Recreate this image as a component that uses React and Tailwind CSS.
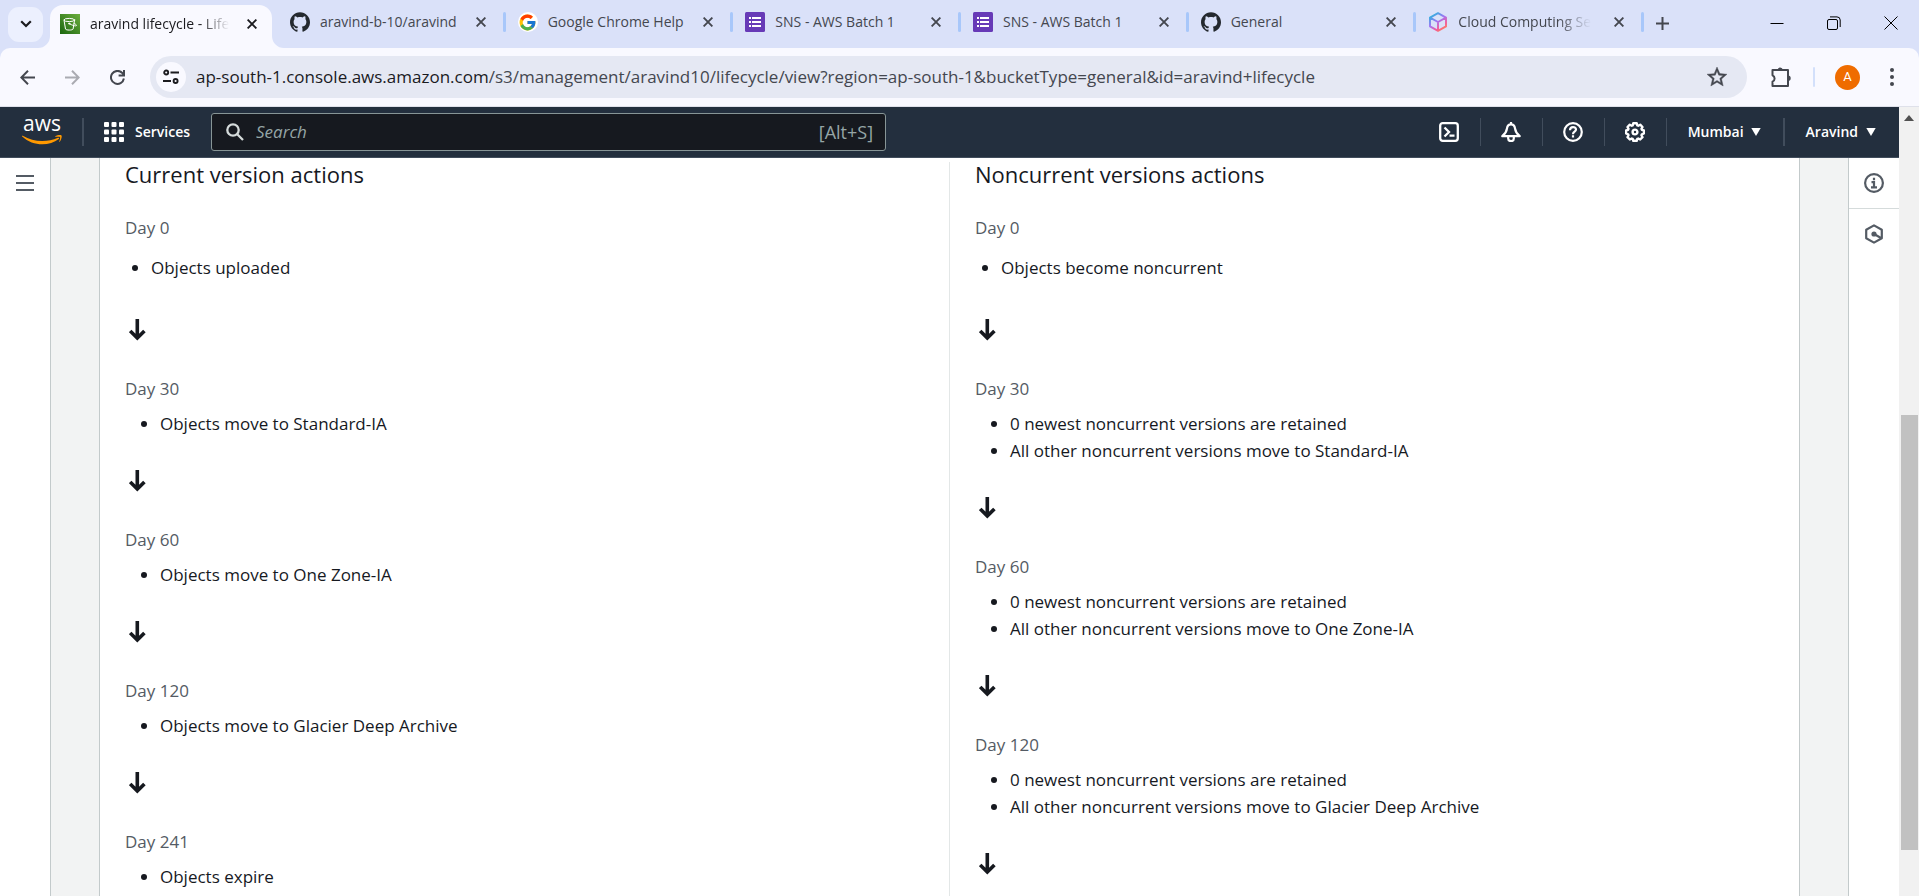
import { SiGithub } from 'react-icons/si'
import { FcGoogle } from 'react-icons/fc'

const TABS = [
  { icon: 'github', title: 'aravind-b-10/aravind' },
  { icon: 'google', title: 'Google Chrome Help' },
  { icon: 'forms', title: 'SNS - AWS Batch 1' },
  { icon: 'forms', title: 'SNS - AWS Batch 1' },
  { icon: 'github', title: 'General' },
  { icon: 'cube', title: 'Cloud Computing Se', fade: true },
]

const CURRENT = [
  { day: 'Day 0', items: ['Objects uploaded'] },
  { day: 'Day 30', items: ['Objects move to Standard-IA'] },
  { day: 'Day 60', items: ['Objects move to One Zone-IA'] },
  { day: 'Day 120', items: ['Objects move to Glacier Deep Archive'] },
  { day: 'Day 241', items: ['Objects expire'] },
]

const NONCURRENT = [
  { day: 'Day 0', items: ['Objects become noncurrent'] },
  {
    day: 'Day 30',
    items: ['0 newest noncurrent versions are retained', 'All other noncurrent versions move to Standard-IA'],
  },
  {
    day: 'Day 60',
    items: ['0 newest noncurrent versions are retained', 'All other noncurrent versions move to One Zone-IA'],
  },
  {
    day: 'Day 120',
    items: ['0 newest noncurrent versions are retained', 'All other noncurrent versions move to Glacier Deep Archive'],
    more: true,
  },
]

function BucketIcon() {
  return (
    <svg className="size-5 shrink-0" viewBox="0 0 20 20" fill="none">
      <defs>
        <linearGradient id="bucket" x1="0" y1="1" x2="1" y2="0">
          <stop stopColor="#1b660f" />
          <stop offset="1" stopColor="#6cae3e" />
        </linearGradient>
      </defs>
      <path fill="url(#bucket)" d="M0 0h20v20H0z" />
      <g stroke="#fff" strokeWidth="1" strokeLinecap="round">
        <ellipse cx="9.3" cy="6" rx="5.3" ry="1.6" />
        <path d="M4 6l1.500 9c.2 1.400 7.400 1.400 7.600 0L14.600 6M9.300 9.700c2.500 1.500 7.200 3 7.200 1.700 0-.8-1.200-1.400-2.500-1.900" />
        <circle cx="9.200" cy="9.600" r=".6" fill="#fff" />
      </g>
    </svg>
  )
}

function FormsIcon() {
  return (
    <svg className="size-5 shrink-0" viewBox="0 0 20 20">
      <rect width="20" height="20" rx="1.500" fill="#673ab7" />
      <path
        fill="#fff"
        d="M4 5h2v2H4zM7 5h9v2H7zM4 9h2v2H4zM7 9h9v2H7zM4 13h2v2H4zM7 13h9v2H7z"
      />
    </svg>
  )
}

function CubeIcon() {
  return (
    <svg className="size-5 shrink-0" viewBox="0 0 20 20" fill="none">
      <defs>
        <linearGradient id="cube" x1="3" y1="1" x2="16" y2="19" gradientUnits="userSpaceOnUse">
          <stop stopColor="#14c0d8" />
          <stop offset=".45" stopColor="#a074f5" />
          <stop offset=".75" stopColor="#f35a9b" />
          <stop offset="1" stopColor="#ff8a4c" />
        </linearGradient>
      </defs>
      <path
        stroke="url(#cube)"
        strokeWidth="1.900"
        strokeLinejoin="round"
        d="M10 1.200l8 4.400v8.800l-8 4.400-8-4.400V5.600zM2.500 5.900L10 10l7.500-4.100M10 10v8.500"
      />
    </svg>
  )
}

function Favicon({ name }) {
  if (name === 'github') return <SiGithub className="size-5 shrink-0 text-[#24292f]" />
  if (name === 'google')
    return (
      <span className="flex size-5 shrink-0 items-center justify-center rounded-full bg-white">
        <FcGoogle className="size-[19px]" />
      </span>
    )
  if (name === 'forms') return <FormsIcon />
  return <CubeIcon />
}

function CloseButton({ dark }) {
  return (
    <button
      aria-label="Close tab"
      className={dark ? 'flex size-5 shrink-0 items-center justify-center text-[#1b1b1f]' : 'flex size-5 shrink-0 items-center justify-center text-[#44474f]'}
    >
      <svg className="size-[10px]" viewBox="0 0 10 10" stroke="currentColor" strokeWidth="1.900">
        <path d="M.6.6l8.800 8.800M9.400.6L.6 9.400" />
      </svg>
    </button>
  )
}

function TabStrip() {
  return (
    <div className="flex h-12 shrink-0 items-center bg-[#dae1f9] text-sm text-[#44474f]">
      <button
        aria-label="Search tabs"
        className="ml-2 flex size-[35px] shrink-0 items-center justify-center rounded-[11px] bg-[#ecf0fe] text-[#1b1b1f]"
      >
        <svg className="h-2 w-3" viewBox="0 0 12 8" fill="none" stroke="currentColor" strokeWidth="2.200">
          <path d="M1.200 1.200L6 6l4.800-4.800" />
        </svg>
      </button>

      <div className="relative ml-[7px] flex h-[43px] w-[222px] shrink-0 items-center self-end rounded-t-[13px] bg-[#f9f9ff] pr-2.5 pb-1.5 pl-2.5 text-[#1b1b1f]">
        <svg className="absolute bottom-0 -left-3 size-3" viewBox="0 0 12 12" fill="#f9f9ff">
          <path d="M12 0v12H0A12 12 0 0 0 12 0z" />
        </svg>
        <svg className="absolute -right-3 bottom-0 size-3" viewBox="0 0 12 12" fill="#f9f9ff">
          <path d="M0 0v12h12A12 12 0 0 1 0 0z" />
        </svg>
        <BucketIcon />
        <a href="#lifecycle" className="ml-2.5 min-w-0 flex-1 whitespace-nowrap">
          <span className="mask-r-from-80%">aravind lifecycle - Life</span>
        </a>
        <CloseButton dark />
      </div>

      <div className="ml-1 flex w-[1368px] min-w-0 items-center pb-1 pl-0.5">
        {TABS.map((tab, i) => (
          <div key={i} className="flex min-w-0 flex-1 items-center pl-3">
            <Favicon name={tab.icon} />
            <a href="#tab" className="ml-2.5 min-w-0 flex-1 whitespace-nowrap">
              <span className={tab.fade ? 'mask-r-from-75%' : ''}>{tab.title}</span>
            </a>
            <CloseButton />
            <span className="ml-3 h-5 w-[3px] shrink-0 rounded-full bg-[#a8c7fa]" />
          </div>
        ))}
      </div>

      <button aria-label="New tab" className="mb-0.5 ml-2 flex size-5 shrink-0 items-center justify-center">
        <svg className="size-[13px]" viewBox="0 0 13 13" stroke="currentColor" strokeWidth="2">
          <path d="M6.500 0v13M0 6.500h13" />
        </svg>
      </button>

      <div className="mr-[21px] mb-0.5 ml-auto flex shrink-0 items-center gap-[43px] text-black">
        <button aria-label="Minimize">
          <svg className="size-[14px]" viewBox="0 0 14 14" stroke="currentColor">
            <path d="M.5 7.500h13" />
          </svg>
        </button>
        <button aria-label="Restore">
          <svg className="size-[14px]" viewBox="0 0 14 14" fill="none" stroke="currentColor">
            <rect x=".5" y="3.500" width="10" height="10" rx="1.500" />
            <path d="M3 .9h7A3.200 3.200 0 0 1 13.200 4v7" />
          </svg>
        </button>
        <button aria-label="Close window">
          <svg className="size-[14px]" viewBox="0 0 14 14" stroke="currentColor">
            <path d="M.5.5l13 13M13.500.5l-13 13" />
          </svg>
        </button>
      </div>
    </div>
  )
}

function Toolbar() {
  return (
    <div className="shrink-0 bg-[#dae1f9]">
      <div className="flex h-[59px] items-center rounded-t-[10px] border-b border-[#dfe1ea] bg-[#f9f9ff] text-[#44474f]">
        <button aria-label="Back" className="ml-5">
          <svg className="size-[15px]" viewBox="0 0 15 15" fill="none" stroke="currentColor" strokeWidth="2">
            <path d="M15 7.500H1.500M8 .8L1.300 7.500 8 14.200" />
          </svg>
        </button>
        <button aria-label="Forward" className="ml-[30px] text-[#aaabb2]">
          <svg className="size-[15px]" viewBox="0 0 15 15" fill="none" stroke="currentColor" strokeWidth="2">
            <path d="M0 7.500h13.500M7 .8l6.700 6.700L7 14.200" />
          </svg>
        </button>
        <button aria-label="Reload" className="ml-[30px]">
          <svg className="size-[15px]" viewBox="0 0 15 15" fill="none" stroke="currentColor" strokeWidth="2">
            <path d="M13.900 8.500A6.500 6.500 0 1 1 12.300 3l1.200 1.500M14 0v5.600H8.600" />
          </svg>
        </button>
        <div className="ml-[25px] flex h-[42px] min-w-0 flex-1 items-center rounded-full bg-[#e5e8f3] pr-[18px] pl-1.5">
          <button
            aria-label="View site information"
            className="flex size-[30px] shrink-0 items-center justify-center rounded-full bg-[#f9f9ff] text-[#1b1b1f]"
          >
            <svg className="size-[16px]" viewBox="0 0 16 16" fill="none" stroke="currentColor" strokeWidth="1.900">
              <circle cx="3.200" cy="3.500" r="2" />
              <path d="M7.500 3.500H16M0 12h8" />
              <circle cx="12.600" cy="12" r="2" />
            </svg>
          </button>
          <a href="#url" className="ml-2.5 min-w-0 flex-1 truncate text-[17px] leading-7">
            <span className="text-[#1b1b1f]">ap-south-1.console.aws.amazon.com</span>
            /s3/management/aravind10/lifecycle/view?region=ap-south-1&amp;bucketType=general&amp;id=aravind+lifecycle
          </a>
          <button aria-label="Bookmark this tab">
            <svg className="size-6" viewBox="0 0 24 24" fill="currentColor" stroke="currentColor" strokeWidth=".4">
              <path d="M22 9.240l-7.190-.62L12 2 9.190 8.630 2 9.240l5.460 4.730L5.820 21 12 17.270 18.180 21l-1.630-7.030L22 9.240zM12 15.400l-3.760 2.270 1-4.280-3.320-2.880 4.380-.38L12 6.100l1.710 4.040 4.380.38-3.320 2.880 1 4.280L12 15.400z" />
            </svg>
          </button>
        </div>
        <button aria-label="Extensions" className="ml-6">
          <svg className="size-[21px]" viewBox="0 0 21 21" fill="none" stroke="currentColor" strokeWidth="2" strokeLinejoin="round">
            <path d="M1.500 3H17v16H1.500v-4.300c2.800-1.200 2.800-5.200 0-6.400z" />
            <path fill="currentColor" stroke="none" d="M6.700 3a2.500 2.500 0 0 1 5 0zM17 8.500a2.700 2.700 0 0 1 0 5.400z" />
          </svg>
        </button>
        <span className="ml-[21px] h-5 w-0.5 rounded-full bg-[#d3e0fb]" />
        <button className="ml-5 flex size-[25px] items-center justify-center rounded-full bg-[#ef6c00] font-['Roboto',sans-serif] text-[13px] text-white">
          A
        </button>
        <button aria-label="Menu" className="mr-[25px] ml-[30px]">
          <svg className="h-[18px] w-1" viewBox="0 0 4 18" fill="currentColor">
            <circle cx="2" cy="2" r="2" />
            <circle cx="2" cy="9" r="2" />
            <circle cx="2" cy="16" r="2" />
          </svg>
        </button>
      </div>
    </div>
  )
}

function Divider() {
  return <span className="h-7 w-px shrink-0 bg-[#414d5c]" />
}

function Caret() {
  return (
    <svg className="h-2 w-2.5" viewBox="0 0 10 8" fill="currentColor">
      <path d="M.3 0h9.400L5 8z" />
    </svg>
  )
}

function ConsoleNav() {
  const iconButton = 'flex w-[61px] items-center justify-center'
  const iconSvg = 'size-5'
  return (
    <header className="flex h-[51px] shrink-0 items-center border-b border-[#414d5c] bg-[#232f3e] text-sm font-semibold text-white">
      <a href="#home" aria-label="AWS home" className="relative ml-[22px] flex h-[26px] w-10 shrink-0 justify-center">
        <span className="-mt-2 text-[21px] leading-6 font-medium">aws</span>
        <svg className="absolute bottom-0 left-0 h-[10px] w-10" viewBox="0 0 40 10" fill="none">
          <path fill="#f90" d="M.7.8C11.500 7.300 25 7.600 36 2.800c.9-.4 1.600.5.8 1.200C27 11.600 10.500 11.300.2 1.500-.3 1 .1.400.7.8z" />
          <path fill="#f90" d="M33.200 1.300C35 .1 38.800-.3 39.500.5c.7 1-.3 4.800-1.900 6.300-.3.200-.6.1-.4-.3.500-1.300 1.300-3.800.8-4.500-.5-.6-3.300-.3-4.500-.2-.4 0-.5-.3-.3-.5z" />
        </svg>
      </a>
      <span className="ml-5 h-7 w-0.5 shrink-0 bg-[#414d5c]" />
      <button className="ml-5 flex shrink-0 items-center gap-[11px]">
        <svg className="size-5" viewBox="0 0 20 20" fill="currentColor">
          {[0, 7.5, 15].map((y) =>
            [0, 7.5, 15].map((x) => <rect key={x + '-' + y} x={x} y={y} width="5" height="5" rx="1" />),
          )}
        </svg>
        Services
      </button>
      <label className="ml-[21px] flex h-[38px] w-[675px] min-w-0 items-center rounded-[3px] border border-[#879596] bg-[#16191f] px-3 text-[17px] font-normal text-[#95a5a6]">
        <svg className="mx-0.5 size-[18px] shrink-0 text-[#d5dbdb]" viewBox="0 0 18 18" fill="none" stroke="currentColor" strokeWidth="2.300">
          <circle cx="7" cy="7" r="5.700" />
          <path d="M11 11l6 6" />
        </svg>
        <input
          type="text"
          aria-label="Search"
          placeholder="Search"
          className="ml-2.5 min-w-0 flex-1 bg-transparent italic outline-none placeholder:text-[#95a5a6]"
        />
        <span className="text-lg">[Alt+S]</span>
      </label>

      <div className="ml-auto flex shrink-0 items-center">
        <button aria-label="CloudShell" className={iconButton}>
          <svg className={iconSvg} viewBox="0 0 20 20" fill="none" stroke="currentColor" strokeWidth="2.300">
            <rect x="1.200" y="1.200" width="17.600" height="17.600" rx="2.500" />
            <path d="M5.500 5.500L10 10l-4.500 4.500M10.500 13.600h5" />
          </svg>
        </button>
        <Divider />
        <button aria-label="Notifications" className={iconButton}>
          <svg className={iconSvg} viewBox="0 0 20 20" fill="none" stroke="currentColor" strokeWidth="2.200" strokeLinejoin="round">
            <path d="M10 2.300c-2.600 0-3.700 1.700-4 4C5.600 9.800 4.300 11.600 1.300 14.200h17.400c-3-2.600-4.300-4.400-4.700-7.900-.3-2.300-1.400-4-4-4zM10 0v2.500" />
            <path d="M7.200 14.500v2a2.800 2.600 0 0 0 5.600 0v-2" />
          </svg>
        </button>
        <Divider />
        <button aria-label="Help" className={iconButton}>
          <svg className={iconSvg} viewBox="0 0 20 20" fill="none" stroke="currentColor" strokeWidth="2.200">
            <circle cx="10" cy="10" r="8.800" />
            <path d="M7 8.200c0-4 6-4 6-.6 0 2.200-3 2-3 4.600M10 13.300v2.200" />
          </svg>
        </button>
        <Divider />
        <button aria-label="Settings" className={iconButton}>
          <svg className={iconSvg} viewBox="0 0 20 20" fill="none" stroke="currentColor" strokeWidth="2.400" strokeLinejoin="round">
            <path d="M8.300 1.200h3.400l.6 2.100 1 .4 1.900-1 2.300 2.300-1 1.900.4 1 2 .6v3l-2 .8-.4 1 1 1.900-2.300 2.300-1.900-1-1 .4-.6 1.900H8.300l-.6-1.900-1-.4-1.900 1-2.300-2.300 1-1.900-.4-1-2-.8v-3l2-.6.4-1-1-1.900 2.300-2.300 1.900 1 1-.4z" />
            <circle cx="10" cy="10" r="2.400" />
          </svg>
        </button>
        <Divider />
        <button className="ml-[21px] flex items-center gap-[7px]">
          Mumbai <Caret />
        </button>
        <span className="ml-[22px] h-7 w-0.5 bg-[#414d5c]" />
        <button className="mr-[23px] ml-[21px] flex items-center gap-2">
          Aravind <Caret />
        </button>
      </div>
    </header>
  )
}

function DownArrow() {
  return (
    <svg className="ml-1 h-[22px] w-[17px]" viewBox="0 0 17 22" fill="none" stroke="#16191f" strokeWidth="3.600">
      <path d="M8.300 0v19M1.200 11.900l7.100 7.100 7.100-7.100" />
    </svg>
  )
}

function Timeline({ title, steps }) {
  return (
    <section className="px-[25px]">
      <h2 className="text-[22px] leading-6">{title}</h2>
      <div className="mt-7">
        {steps.map((step, i) => (
          <div key={step.day}>
            <h3 className="leading-7 text-[#545b64]">{step.day}</h3>
            <ul className={i === 0 ? 'mt-3 list-disc pb-1.5 pl-[26px]' : 'mt-[7px] list-disc pb-px pl-[35px]'}>
              {step.items.map((item) => (
                <li key={item} className="leading-[27px]">
                  {item}
                </li>
              ))}
            </ul>
            {(i < steps.length - 1 || step.more) && (
              <div className="pt-8 pb-[34px]">
                <DownArrow />
              </div>
            )}
          </div>
        ))}
      </div>
    </section>
  )
}

function Scrollbar() {
  return (
    <div className="flex w-5 shrink-0 flex-col items-center bg-[#f1f1f1]" aria-hidden="true">
      <svg className="mt-2 h-[6px] w-[10px] shrink-0" viewBox="0 0 10 6" fill="#505050">
        <path d="M5 0l5 6H0z" />
      </svg>
      <span className="grow-[294]" />
      <span className="w-[17px] grow-[435] bg-[#c1c1c1]" />
      <span className="grow-[46]" />
    </div>
  )
}

export default function App() {
  return (
    <div className="flex h-screen flex-col overflow-hidden bg-white font-['Open_Sans','Noto_Sans',sans-serif]">
      <TabStrip />
      <Toolbar />
      <div className="flex min-h-0 flex-1">
        <div className="flex min-w-0 flex-1 flex-col">
          <ConsoleNav />
          <div className="flex min-h-0 flex-1 bg-[#f2f3f3] text-[17px] text-[#16191f]">
            <aside className="w-[51px] shrink-0 border-r border-[#c3cacb] bg-white">
              <button aria-label="Open navigation" className="mt-[17px] ml-4 block text-[#545b64]">
                <svg className="h-4 w-[18px]" viewBox="0 0 18 16" stroke="currentColor" strokeWidth="2">
                  <path d="M0 1h18M0 8h18M0 15h18" />
                </svg>
              </button>
            </aside>
            <main className="mx-12 flex min-w-0 flex-1 border-x border-[#c3cacb] bg-white pt-1">
              <div className="flex-1">
                <Timeline title="Current version actions" steps={CURRENT} />
              </div>
              <div className="flex-1 border-l border-[#e3e7e7]">
                <Timeline title="Noncurrent versions actions" steps={NONCURRENT} />
              </div>
            </main>
            <aside className="flex w-[51px] shrink-0 flex-col items-center border-l border-[#c3cacb] bg-white text-[#545b64]">
              <button aria-label="Info" className="flex h-[51px] w-full items-center justify-center border-b border-[#d5dbdb]">
                <svg className="size-5" viewBox="0 0 20 20" fill="none" stroke="currentColor" strokeWidth="2.200">
                  <circle cx="10" cy="10" r="8.900" />
                  <path d="M10 4.700v2.500M7.500 9.100H10v4.700M7 14.300h6" />
                </svg>
              </button>
              <button aria-label="Diagnose" className="flex h-[50px] w-full items-center justify-center">
                <svg className="size-5" viewBox="0 0 20 20" fill="none" stroke="currentColor" strokeWidth="2.200">
                  <path strokeLinejoin="round" d="M10 1.400l7.800 4.300v8.600L10 18.600l-7.800-4.300V5.700z" />
                  <circle cx="10" cy="10" r="2.600" fill="currentColor" stroke="none" />
                  <path d="M10 10l7.500 4.300" />
                </svg>
              </button>
            </aside>
          </div>
        </div>
        <Scrollbar />
      </div>
    </div>
  )
}
